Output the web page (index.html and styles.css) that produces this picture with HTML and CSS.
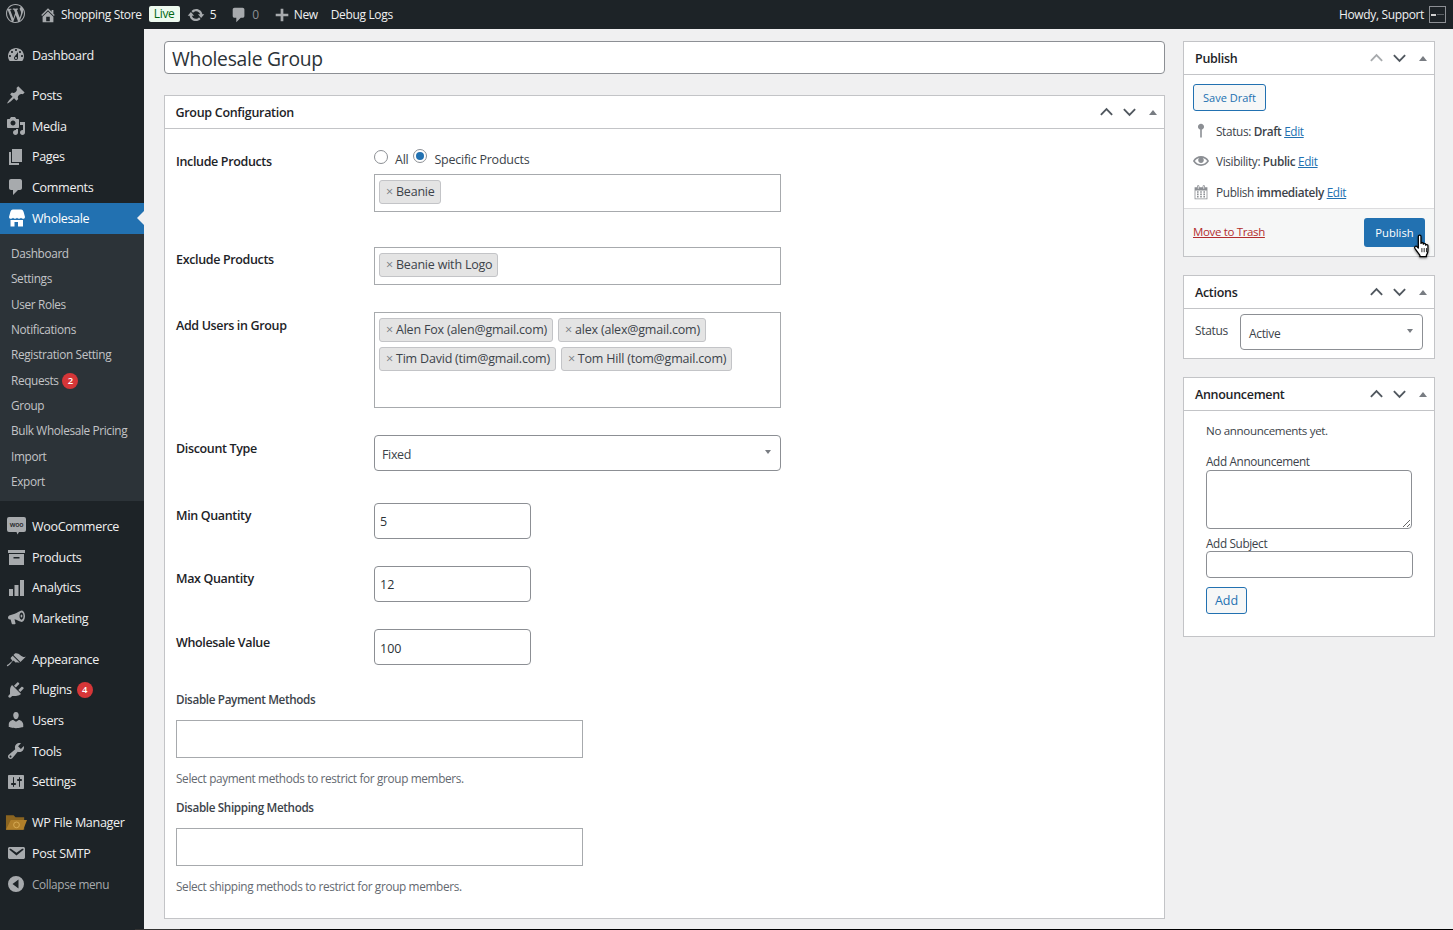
FILE: index.html
```html
<!DOCTYPE html>
<html lang="en">
<head>
<meta charset="utf-8">
<title>Wholesale Group</title>
<link rel="stylesheet" href="styles.css">
</head>
<body>
<svg class="defs" width="0" height="0" aria-hidden="true">
  <defs>
    <symbol id="i-wp" viewBox="0 0 20 20"><path d="M20 10c0-5.51-4.49-10-10-10C4.48 0 0 4.49 0 10c0 5.52 4.48 10 10 10 5.51 0 10-4.48 10-10zM7.78 15.37L4.37 6.22c.55-.02 1.17-.08 1.17-.08.5-.06.44-1.13-.06-1.11 0 0-1.45.11-2.37.11-.18 0-.37 0-.58-.01C4.12 2.69 6.87 1.11 10 1.11c2.33 0 4.45.87 6.05 2.34-.68-.11-1.65.39-1.65 1.58 0 .74.45 1.36.9 2.1.35.61.55 1.36.55 2.46 0 1.49-1.4 5-1.4 5l-3.03-8.37c.54-.02.82-.17.82-.17.5-.05.44-1.25-.06-1.22 0 0-1.44.12-2.38.12-.87 0-2.33-.12-2.33-.12-.5-.03-.56 1.2-.06 1.22l.92.08 1.26 3.41zM17.41 10c.24-.64.74-1.87.43-4.25.7 1.29 1.05 2.71 1.05 4.25 0 3.29-1.73 6.24-4.4 7.78.97-2.59 1.94-5.2 2.92-7.78zM6.1 18.09C3.12 16.65 1.11 13.53 1.11 10c0-1.3.23-2.48.72-3.59C3.25 10.3 4.67 14.2 6.1 18.09zm4.03-6.63l2.58 6.98c-.86.29-1.76.45-2.71.45-.79 0-1.57-.11-2.29-.33.81-2.38 1.62-4.74 2.42-7.1z"/></symbol>
    <symbol id="i-home" viewBox="0 0 20 20"><path d="M16 8.5l1.53 1.53-1.06 1.06L10 4.62l-6.47 6.47-1.06-1.06L10 2.5l4 4v-2h2v4zm-6-2.46l6 5.99V18H4v-5.97zM12 17v-5H8v5h4z"/></symbol>
    <symbol id="i-update" viewBox="0 0 20 20"><path d="M10.2 3.28c3.53 0 6.43 2.61 6.92 6h2.08l-3.5 4-3.5-4h2.32c-.45-1.97-2.21-3.45-4.32-3.45-1.45 0-2.73.71-3.54 1.78L4.95 5.66C6.23 4.2 8.11 3.28 10.2 3.28zm-.4 13.44c-3.52 0-6.43-2.61-6.92-6H.8l3.5-4c1.17 1.33 2.33 2.67 3.5 4H5.48c.45 1.97 2.21 3.45 4.32 3.45 1.45 0 2.73-.71 3.54-1.78l1.71 1.95c-1.28 1.46-3.15 2.38-5.25 2.38z"/></symbol>
    <symbol id="i-comment" viewBox="0 0 20 20"><path d="M5 2h9c1.1 0 2 .9 2 2v7c0 1.1-.9 2-2 2h-2l-5 5v-5H5c-1.1 0-2-.9-2-2V4c0-1.1.9-2 2-2z"/></symbol>
    <symbol id="i-plus" viewBox="0 0 20 20"><path d="M17 8.5v3h-5.500V17h-3v-5.500H3v-3h5.500V3h3v5.500H17z"/></symbol>
    <symbol id="i-dash" viewBox="0 0 20 20"><path d="M3.76 16h12.48c1.1-1.37 1.76-3.11 1.76-5 0-4.42-3.58-8-8-8s-8 3.58-8 8c0 1.89.66 3.63 1.76 5zM10 4c.55 0 1 .45 1 1s-.45 1-1 1-1-.45-1-1 .45-1 1-1zM6 6c.55 0 1 .45 1 1s-.45 1-1 1-1-.45-1-1 .45-1 1-1zm8 0c.55 0 1 .45 1 1s-.45 1-1 1-1-.45-1-1 .45-1 1-1zm-5.37 5.55L12 7v6c0 1.1-.9 2-2 2s-2-.9-2-2c0-.57.24-1.08.63-1.45zM4 10c.55 0 1 .45 1 1s-.45 1-1 1-1-.45-1-1 .45-1 1-1zm12 0c.55 0 1 .45 1 1s-.45 1-1 1-1-.45-1-1 .45-1 1-1zm-5 3c0-.55-.45-1-1-1s-1 .45-1 1 .45 1 1 1 1-.45 1-1z"/></symbol>
    <symbol id="i-pin" viewBox="0 0 20 20"><path d="M10.44 3.02l1.82-1.82 6.36 6.35-1.83 1.82c-1.05-.68-2.48-.57-3.41.36l-.75.75c-.92.93-1.04 2.35-.35 3.41l-1.83 1.82-2.41-2.41-2.8 2.79c-.42.42-3.38 2.71-3.8 2.29s1.86-3.39 2.28-3.81l2.79-2.79L4.1 9.36l1.83-1.82c1.05.69 2.48.57 3.4-.36l.75-.75c.93-.92 1.05-2.35.36-3.41z"/></symbol>
    <symbol id="i-media" viewBox="0 0 20 20"><path d="M13 11V4c0-.55-.45-1-1-1h-1.67L9 1H5L3.67 3H2c-.55 0-1 .45-1 1v7c0 .55.45 1 1 1h10c.55 0 1-.45 1-1zM7 4.5c1.38 0 2.5 1.12 2.5 2.5S8.38 9.5 7 9.5 4.5 8.38 4.5 7 5.62 4.5 7 4.5zM14 6h5v10.5c0 1.38-1.12 2.5-2.5 2.5S14 17.88 14 16.5s1.12-2.5 2.5-2.5c.17 0 .34.02.5.05V9h-3V6zm-4 8.05V13h2v3.5c0 1.38-1.12 2.5-2.5 2.5S7 17.88 7 16.5 8.12 14 9.5 14c.17 0 .34.02.5.05z"/></symbol>
    <symbol id="i-pages" viewBox="0 0 20 20"><path d="M6 15V2h10v13H6zm-1 1h8v2H3V5h2v11z"/></symbol>
    <symbol id="i-store" viewBox="0 0 20 20"><path d="M5 1.500h10c1.500 0 2.300 1 2.800 3l1.200 4.500c0 1.300-1.100 1.800-2 1.800-.9 0-1.500-.4-2-1-.5.6-1.200 1-2 1s-1.500-.4-2-1c-.5.6-1.200 1-2 1s-1.500-.4-2-1c-.5.6-1.100 1-2 1-.9 0-2-.5-2-1.800l1.200-4.500c.5-2 1.300-3 2.800-3z"/><path fill-rule="evenodd" d="M4.500 12h12.500v6.500H4.500zM8.500 14v4.500h3.500V14z"/></symbol>
    <symbol id="i-woo" viewBox="0 0 20 20"><path d="M3 1h15a2 2 0 0 1 2 2v11a2 2 0 0 1-2 2h-5l-1.500 2.500-1-2.500H3a2 2 0 0 1-2-2V3a2 2 0 0 1 2-2z"/></symbol>
    <symbol id="i-box" viewBox="0 0 20 20"><path fill-rule="evenodd" d="M2 3h17v3H2zM3 7h15v11H3zM7.500 10v1.500h6V10z"/></symbol>
    <symbol id="i-bars" viewBox="0 0 20 20"><path d="M3 11h4v7H3zM8.500 7h4v11h-4zM14 2h4v16h-4z"/></symbol>
    <symbol id="i-mega" viewBox="0 0 20 20"><path fill-rule="evenodd" d="M19 8c0 3-1.500 6-3.500 6-1 0-5-2.300-7-2.700l1 4c.1.500-.2.900-.7.900H6.500c-.4 0-.7-.2-.8-.6L4.600 11.500H4C2.800 11.500 2 10.500 2 9.500S2.800 7.700 4 7.300L8 6c2-.6 6.500-3.500 7.500-3.500C17.500 2.500 19 5 19 8zM15.500 4.500c-1.100 0-2 1.600-2 3.600s.9 3.600 2 3.600 2-1.600 2-3.600-.9-3.600-2-3.600z"/><ellipse cx="15.500" cy="8" rx=".9" ry="1.600"/></symbol>
    <symbol id="i-brush" viewBox="0 0 20 20"><path d="M14.480 11.060L7.410 3.990l1.500-1.500c.5-.56 2.300-.47 3.510.32 1.210.8 1.430 1.280 2.910 2.100 1.180.64 2.450 1.260 4.450.85zm-.71.71L6.700 4.700 4.930 6.470c-.39.39-.39 1.020 0 1.410l1.060 1.060c.39.39.39 1.030 0 1.420-.6.6-1.430 1.150-2.210 1.730-.35.260-.7.530-1.010.84C1.430 13.280.4 14.400 1.050 15.050s1.770-.38 3.120-1.720c.31-.31.580-.66.840-1.010.58-.78 1.130-1.610 1.730-2.210.39-.39 1.030-.39 1.420 0l1.060 1.060c.39.39 1.020.39 1.410 0z" transform="translate(0 2)"/></symbol>
    <symbol id="i-plug" viewBox="0 0 20 20"><path d="M13.110 4.360L9.870 7.600 8 5.730l3.240-3.240c.35-.34 1.050-.2 1.560.32.52.51.66 1.210.31 1.55zm-8 1.770l.91-1.120 9.010 9.010-1.190.84c-.71.71-2.630 1.160-3.820 1.160H6.140L4.900 17.260c-.59.59-1.540.59-2.120 0-.59-.58-.59-1.530 0-2.120l1.240-1.240v-3.880c0-1.130.4-3.190 1.090-3.890zm7.260 3.970l3.240-3.240c.34-.35 1.040-.21 1.550.31.52.51.66 1.210.31 1.550l-3.240 3.250z"/></symbol>
    <symbol id="i-user" viewBox="0 0 20 20"><path d="M10 9.250c-2.270 0-2.730-3.440-2.730-3.440C7 4.020 7.820 2 9.970 2c2.160 0 2.980 2.020 2.710 3.810 0 0-.41 3.440-2.680 3.440zm0 2.570L12.720 10c2.390 0 4.520 2.330 4.520 4.530v2.490s-3.650 1.130-7.240 1.130c-3.650 0-7.240-1.130-7.240-1.130v-2.490c0-2.250 1.940-4.480 4.470-4.480z"/></symbol>
    <symbol id="i-tool" viewBox="0 0 20 20"><path d="M16.680 9.770c-1.340 1.340-3.3 1.67-4.95.99l-5.41 6.52c-.99.99-2.59.99-3.58 0s-.99-2.59 0-3.57l6.52-5.42c-.68-1.65-.35-3.61.99-4.95 1.28-1.28 3.12-1.62 4.72-1.06l-2.89 2.89 2.82 2.82 2.86-2.87c.53 1.58.18 3.39-1.08 4.65zM3.81 16.21c.4.39 1.04.39 1.43 0 .4-.4.4-1.04 0-1.43-.39-.4-1.03-.4-1.43 0-.39.39-.39 1.03 0 1.43z"/></symbol>
    <symbol id="i-set" viewBox="0 0 20 20"><path d="M18 16V4c0-.55-.45-1-1-1H3c-.55 0-1 .45-1 1v12c0 .55.45 1 1 1h14c.55 0 1-.45 1-1zM8 11h1c.55 0 1 .45 1 1s-.45 1-1 1H8v1.500c0 .28-.22.5-.5.5s-.5-.22-.5-.5V13H6c-.55 0-1-.45-1-1s.45-1 1-1h1V5.500c0-.28.22-.5.5-.5s.5.22.5.5V11zm5-2h-1c-.55 0-1-.45-1-1s.45-1 1-1h1V5.500c0-.28.22-.5.5-.5s.5.22.5.5V7h1c.55 0 1 .45 1 1s-.45 1-1 1h-1v5.500c0 .28-.22.5-.5.5s-.5-.22-.5-.5V9z"/></symbol>
    <symbol id="i-mail" viewBox="0 0 20 20"><path d="M3.870 4h13.250C18.370 4 19 4.590 19 5.790v8.420c0 1.190-.63 1.790-1.880 1.790H3.870c-1.250 0-1.880-.6-1.880-1.790V5.790c0-1.200.63-1.790 1.880-1.790zm6.620 8.600l6.740-5.530c.24-.2.430-.66.130-1.070-.29-.41-.82-.42-1.170-.17l-5.700 3.860L4.800 5.830c-.35-.25-.88-.24-1.170.17-.3.41-.11.870.13 1.070z"/></symbol>
    <symbol id="i-collapse" viewBox="0 0 20 20"><path fill-rule="evenodd" d="M10 2a8 8 0 1 1 0 16 8 8 0 0 1 0-16zM12.500 5.500L6.500 10l6 4.500z"/></symbol>
    <symbol id="i-eye" viewBox="0 0 20 20"><path d="M19.700 9.400C17.700 6 14 3.900 10 3.900S2.300 6 .3 9.400L0 10l.3.6c2 3.400 5.700 5.500 9.700 5.500s7.700-2.100 9.700-5.500l.3-.6-.3-.6zM10 14.100c-3.100 0-6-1.600-7.700-4.100C3.600 8 5.700 6.600 8 6.100c-.9.6-1.500 1.700-1.500 2.900 0 1.900 1.600 3.500 3.500 3.500s3.500-1.600 3.500-3.500c0-1.200-.6-2.300-1.500-2.900 2.300.5 4.400 1.900 5.700 3.900-1.700 2.500-4.600 4.100-7.700 4.100z"/></symbol>
    <symbol id="i-spin" viewBox="0 0 20 20"><path d="M10 1.500c-2.100 0-3.800 1.700-3.800 3.800 0 1.700 1.200 3.200 2.800 3.600V18l1 1.500 1-1.500V8.900c1.600-.4 2.800-1.900 2.800-3.600 0-2.100-1.700-3.800-3.800-3.800z"/></symbol>
    <symbol id="i-cal" viewBox="0 0 20 20"><path d="M15 4h3v15H2V4h3V3c0-.41.15-.76.44-1.060.29-.29.65-.44 1.060-.44s.77.15 1.060.44c.29.3.44.65.44 1.060v1h4V3c0-.41.15-.76.44-1.060.29-.29.65-.44 1.060-.44s.77.15 1.060.44c.29.3.44.65.44 1.060v1zM6 3v2.500c0 .14.05.26.15.36.09.09.21.14.35.14s.26-.05.35-.14c.1-.1.15-.22.15-.36V3c0-.14-.05-.26-.15-.35-.09-.1-.21-.15-.35-.15s-.26.05-.35.15c-.1.09-.15.21-.15.35zm7 0v2.500c0 .14.05.26.14.36.1.09.22.14.36.14s.26-.05.36-.14c.09-.1.14-.22.14-.36V3c0-.14-.05-.26-.14-.35-.1-.1-.22-.15-.36-.15s-.26.05-.36.15c-.09.09-.14.21-.14.35zm4 15V8H3v10h14zM7 9v2H5V9h2zm2 0h2v2H9V9zm4 2V9h2v2h-2zm-6 1v2H5v-2h2zm2 0h2v2H9v-2zm4 2v-2h2v2h-2zm-6 1v2H5v-2h2zm4 2H9v-2h2v2zm4 0h-2v-2h2v2z"/></symbol>
    <symbol id="i-up" viewBox="0 0 16 10"><path d="M2 8l6-6 6 6" fill="none" stroke="currentColor" stroke-width="2"/></symbol>
    <symbol id="i-down" viewBox="0 0 16 10"><path d="M2 2l6 6 6-6" fill="none" stroke="currentColor" stroke-width="2"/></symbol>
  </defs>
</svg>

<header class="adminbar">
  <div class="ab-group">
    <svg class="ab-wp"><use href="#i-wp"/></svg>
    <svg class="ab-home"><use href="#i-home"/></svg>
    <span class="ab-text">Shopping Store</span>
    <span class="live">Live</span>
    <svg class="ab-update"><use href="#i-update"/></svg>
    <span class="ab-text">5</span>
    <svg class="ab-comment"><use href="#i-comment"/></svg>
    <span class="ab-text ab-dim">0</span>
    <svg class="ab-plus"><use href="#i-plus"/></svg>
    <span class="ab-text">New</span>
    <span class="ab-text ab-debug">Debug Logs</span>
  </div>
  <div class="ab-group">
    <span class="ab-text">Howdy, Support</span>
    <span class="avatar"><span class="avatar-mark"></span><span class="avatar-rest"></span></span>
  </div>
</header>

<div class="layout">
  <nav class="sidebar">
    <ul class="menu">
      <li class="item"><svg class="mi"><use href="#i-dash"/></svg>Dashboard</li>
      <li class="item sep sep-first"><svg class="mi"><use href="#i-pin"/></svg>Posts</li>
      <li class="item"><svg class="mi"><use href="#i-media"/></svg>Media</li>
      <li class="item"><svg class="mi"><use href="#i-pages"/></svg>Pages</li>
      <li class="item"><svg class="mi"><use href="#i-comment"/></svg>Comments</li>
      <li class="item current"><svg class="mi"><use href="#i-store"/></svg>Wholesale</li>
      <li class="submenu">
        <ul>
          <li>Dashboard</li>
          <li>Settings</li>
          <li>User Roles</li>
          <li>Notifications</li>
          <li>Registration Setting</li>
          <li>Requests <span class="count">2</span></li>
          <li>Group</li>
          <li>Bulk Wholesale Pricing</li>
          <li>Import</li>
          <li>Export</li>
        </ul>
      </li>
      <li class="item sep"><svg class="mi"><use href="#i-woo"/><text class="woo-text" x="10.500" y="11">woo</text></svg>WooCommerce</li>
      <li class="item"><svg class="mi"><use href="#i-box"/></svg>Products</li>
      <li class="item"><svg class="mi"><use href="#i-bars"/></svg>Analytics</li>
      <li class="item"><svg class="mi"><use href="#i-mega"/></svg>Marketing</li>
      <li class="item sep"><svg class="mi"><use href="#i-brush"/></svg>Appearance</li>
      <li class="item"><svg class="mi"><use href="#i-plug"/></svg>Plugins <span class="count">4</span></li>
      <li class="item"><svg class="mi"><use href="#i-user"/></svg>Users</li>
      <li class="item"><svg class="mi"><use href="#i-tool"/></svg>Tools</li>
      <li class="item"><svg class="mi"><use href="#i-set"/></svg>Settings</li>
      <li class="item sep"><svg class="mi mi-folder" viewBox="0 0 24 20"><path fill="#8a6420" d="M1 3h8l2 2h9v13H1z"/><path fill="#b07f2a" d="M6 8h17l-4 10H1z"/><circle cx="12" cy="13" r="3" fill="none" stroke="#d7ab55" stroke-width="1"/></svg>WP File Manager</li>
      <li class="item"><svg class="mi"><use href="#i-mail"/></svg>Post SMTP</li>
      <li class="item collapse"><svg class="mi"><use href="#i-collapse"/></svg>Collapse menu</li>
    </ul>
  </nav>

  <main class="content">
    <div class="main-col">
      <input class="title" type="text" value="Wholesale Group" aria-label="Title">
      <section class="box group-box">
        <div class="box-head">
          <h2>Group Configuration</h2>
          <div class="box-ctrls">
            <svg class="chev"><use href="#i-up"/></svg>
            <svg class="chev"><use href="#i-down"/></svg>
            <span class="tri"></span>
          </div>
        </div>
        <div class="form">
          <div class="row row-include">
            <label class="lbl">Include Products</label>
            <div class="field">
              <div class="radios">
                <input class="radio" type="radio" name="scope" aria-label="All"><span class="radio-l">All</span>
                <input class="radio" type="radio" name="scope" checked aria-label="Specific Products"><span class="radio-l">Specific Products</span>
              </div>
              <div class="tags tags-one"><span class="tag"><i>×</i>Beanie</span></div>
            </div>
          </div>
          <div class="row row-exclude">
            <label class="lbl">Exclude Products</label>
            <div class="field">
              <div class="tags tags-one"><span class="tag"><i>×</i>Beanie with Logo</span></div>
            </div>
          </div>
          <div class="row row-users">
            <label class="lbl lbl-low">Add Users in Group</label>
            <div class="field">
              <div class="tags tags-users">
                <span class="tag"><i>×</i>Alen Fox (alen@gmail.com)</span>
                <span class="tag"><i>×</i>alex (alex@gmail.com)</span>
                <span class="tag"><i>×</i>Tim David (tim@gmail.com)</span>
                <span class="tag"><i>×</i>Tom Hill (tom@gmail.com)</span>
              </div>
            </div>
          </div>
          <div class="row row-discount">
            <label class="lbl lbl-low">Discount Type</label>
            <div class="field">
              <div class="select select-wide"><span>Fixed</span></div>
            </div>
          </div>
          <div class="row row-num">
            <label class="lbl">Min Quantity</label>
            <input class="num" type="text" value="5" aria-label="Min Quantity">
          </div>
          <div class="row row-num">
            <label class="lbl">Max Quantity</label>
            <input class="num" type="text" value="12" aria-label="Max Quantity">
          </div>
          <div class="row row-num row-val">
            <label class="lbl lbl-low">Wholesale Value</label>
            <input class="num" type="text" value="100" aria-label="Wholesale Value">
          </div>
          <div class="block block-pay">
            <label class="lbl-b">Disable Payment Methods</label>
            <div class="multi"></div>
            <p class="help">Select payment methods to restrict for group members.</p>
          </div>
          <div class="block">
            <label class="lbl-b">Disable Shipping Methods</label>
            <div class="multi"></div>
            <p class="help">Select shipping methods to restrict for group members.</p>
          </div>
        </div>
      </section>
    </div>

    <aside class="side-col">
      <section class="box publish">
        <div class="box-head side-head">
          <h2>Publish</h2>
          <div class="box-ctrls side-ctrls">
            <svg class="chev chev-dim"><use href="#i-up"/></svg>
            <svg class="chev"><use href="#i-down"/></svg>
            <span class="tri"></span>
          </div>
        </div>
        <div class="pub-body">
          <button class="btn-sec btn-draft" type="button">Save Draft</button>
          <div class="pub-row pub-status"><svg class="pi pi-pin"><use href="#i-spin"/></svg><span>Status: <b>Draft</b> <a href="#">Edit</a></span></div>
          <div class="pub-row pub-vis"><svg class="pi"><use href="#i-eye"/></svg><span>Visibility: <b>Public</b> <a href="#">Edit</a></span></div>
          <div class="pub-row pub-date"><svg class="pi"><use href="#i-cal"/></svg><span>Publish <b>immediately</b> <a href="#">Edit</a></span></div>
        </div>
        <div class="pub-foot">
          <a class="trash" href="#">Move to Trash</a>
          <button class="btn-pri" type="button">Publish</button>
          <svg class="cursor" viewBox="0 0 17 24"><path fill="#fff" stroke="#000" stroke-width="1.200" stroke-linejoin="round" d="M5 2.200c0-1.600 2.500-1.600 2.500 0V9c0-.9 2.300-.9 2.300 0v.8c0-.9 2.200-.9 2.200 0v.9c0-.9 2.200-.7 2.200.4V16c0 2-1 3.500-1.500 4.500v1.300H6.500v-1.300L1.800 14c-1.200-1.800.8-3.200 2-1.800L5 13.500z"/><path stroke="#000" stroke-width=".8" d="M8.400 13.500v4M10.600 13.500v4M12.800 13.500v4"/></svg>
        </div>
      </section>

      <section class="box actions">
        <div class="box-head side-head">
          <h2>Actions</h2>
          <div class="box-ctrls side-ctrls">
            <svg class="chev"><use href="#i-up"/></svg>
            <svg class="chev"><use href="#i-down"/></svg>
            <span class="tri"></span>
          </div>
        </div>
        <div class="act-body">
          <span class="act-l">Status</span>
          <div class="select select-act"><span>Active</span></div>
        </div>
      </section>

      <section class="box announce">
        <div class="box-head side-head">
          <h2>Announcement</h2>
          <div class="box-ctrls side-ctrls">
            <svg class="chev"><use href="#i-up"/></svg>
            <svg class="chev"><use href="#i-down"/></svg>
            <span class="tri"></span>
          </div>
        </div>
        <div class="ann-body">
          <p class="ann-empty">No announcements yet.</p>
          <label class="ann-l ann-l1">Add Announcement</label>
          <textarea class="ann-area" aria-label="Add Announcement"></textarea>
          <label class="ann-l ann-l2">Add Subject</label>
          <input class="ann-input" type="text" aria-label="Add Subject">
          <button class="btn-sec btn-add" type="button">Add</button>
        </div>
      </section>
    </aside>
  </main>
</div>
<div class="edge"><span class="edge-gap"></span><span class="edge-grey"></span></div>
</body>
</html>
```
FILE: styles.css
```css
* { box-sizing: border-box; }
html, body { margin: 0; padding: 0; height: 930px; overflow: hidden; }
body {
  background: #f0f0f1;
  color: #3c434a;
  font-family: "Open Sans", "Noto Sans", sans-serif;
  font-size: 12.500px;
  letter-spacing: -0.35px;
}
ul { list-style: none; margin: 0; padding: 0; }
p, h2 { margin: 0; }
a { color: #2271b1; }
.defs { position: absolute; }

/* admin bar */
.adminbar {
  height: 29px;
  background: #1d2327;
  display: flex;
  justify-content: space-between;
  align-items: center;
  padding: 0 7px 0 6px;
  font-size: 12px;
}
.ab-group { display: flex; align-items: center; }
.ab-text { color: #f0f0f1; line-height: 29px; }
.ab-dim { color: #8c8f94; }
.adminbar svg { fill: #a7aaad; }
.ab-wp { width: 19px; height: 19px; margin-right: 14px; margin-bottom: 2px; }
.ab-home { width: 18px; height: 18px; margin-right: 4px; }
.live {
  background: #edfaef;
  color: #00660f;
  line-height: 16px;
  height: 16px;
  width: 31px;
  text-align: center;
  border-radius: 2px;
  margin: 0 7px 2px 7px;
}
.ab-update { width: 18px; height: 18px; margin-right: 5px; }
.ab-comment { width: 18px; height: 18px; margin: 1px 4px 0 14px; }
.ab-plus { width: 18px; height: 18px; margin: 0 3px 0 14px; }
.ab-debug { margin-left: 13px; }
.avatar {
  width: 17px; height: 17px;
  border: 1px solid #8c8f94;
  margin-left: 5px;
  background: #1d2327;
  display: flex;
  align-items: center;
  gap: 1px;
  padding-left: 1px;
}
.avatar-mark { width: 5px; height: 2px; background: #d0d0d0; }
.avatar-rest { width: 7px; height: 1px; background: #5a5f63; }

/* layout */
.layout { display: flex; height: 900px; }
.sidebar { width: 144px; flex: none; background: #1d2327; padding-top: 11px; }

.item {
  height: 30.700px;
  display: flex;
  align-items: center;
  color: #f0f0f1;
  font-size: 12.600px;
  padding-left: 32px;
  position: relative;
  white-space: pre;
}
.item.sep { margin-top: 10px; }
.item.sep-first { margin-top: 9.200px; height: 31px; }
.item .count { margin-left: 2px; }
.mi {
  position: absolute;
  left: 6px;
  top: 5px;
  width: 20px;
  height: 20px;
  fill: #a7aaad;
}
.mi-folder { left: 5px; width: 23px; }
.woo-text { fill: #1d2327; font-size: 7px; font-weight: 600; text-anchor: middle; letter-spacing: -0.3px; }
.current { background: #2271b1; color: #fff; }
.current .mi { fill: #fff; }
.current::after {
  content: "";
  position: absolute;
  right: 0;
  top: 8px;
  border: 7px solid transparent;
  border-left: 0;
  border-right: 7px solid #f0f0f1;
}
.submenu { background: #2c3338; padding: 7.400px 0 0; height: 267.500px; }
.submenu li {
  height: 25.350px;
  line-height: 25.350px;
  padding-left: 11px;
  color: #c3c4c7;
  font-size: 11.800px;
  white-space: pre;
}
.count {
  display: inline-block;
  min-width: 16px;
  height: 16px;
  line-height: 16px;
  border-radius: 8px;
  background: #d63638;
  color: #fff;
  font-size: 9.500px;
  font-weight: 600;
  text-align: center;
  letter-spacing: 0;
  vertical-align: 1px;
  margin-left: 1px;
}
.collapse { color: #a7aaad; font-size: 11.800px; }
.collapse .mi { left: 6px; }

/* content */
.content { flex: 1; display: flex; padding: 12px 18px 0 20px; gap: 18px; align-items: flex-start; }
.main-col { width: 1001px; flex: none; }
.side-col { width: 252px; flex: none; }

.title {
  display: block;
  width: 100%;
  height: 33px;
  border: 1px solid #8c8f94;
  border-radius: 4px;
  background: #fff;
  color: #2c3338;
  font: inherit;
  font-size: 19.300px;
  letter-spacing: -0.25px;
  padding: 2px 7px 0;
  margin-bottom: 21px;
  outline: none;
}

.box { background: #fff; border: 1px solid #c3c4c7; }
.box-head {
  height: 33px;
  display: flex;
  align-items: center;
  justify-content: space-between;
  border-bottom: 1px solid #c3c4c7;
  padding-left: 10.500px;
}
.box-head h2 { font-size: 12.500px; font-weight: 600; color: #1d2327; letter-spacing: -0.3px; }
.box-ctrls { display: flex; align-items: center; gap: 8px; padding-right: 7px; }
.chev { width: 15px; height: 10px; color: #50575e; }
.chev-dim { color: #a7aaad; }
.tri {
  width: 0; height: 0;
  border: 4px solid transparent;
  border-top: 0;
  border-bottom: 5px solid #787c82;
  margin-left: 4px;
}
.side-ctrls .tri { margin-left: 4.500px; }

.group-box { height: 824px; }
.form { padding: 21px 11px 0 11px; }
.row { display: flex; }
.lbl {
  width: 198px;
  flex: none;
  font-weight: 600;
  color: #1d2327;
  padding-top: 3px;
  line-height: 20px;
}
.lbl-low { padding-top: 4px; }
.row-include .lbl { padding-top: 2px; }
.row-include { margin-bottom: 35px; }
.row-exclude { margin-bottom: 27px; }
.row-users { margin-bottom: 27px; }
.row-discount { margin-bottom: 32px; }
.row-num { margin-bottom: 27px; }
.row-val { margin-bottom: 24px; }
.field { width: 407px; }

.radios { height: 24px; display: flex; align-items: flex-start; }
.radio {
  appearance: none;
  width: 14px; height: 14px;
  margin: 0 7px 0 0;
  border: 1px solid #8c8f94;
  border-radius: 50%;
  background: #fff;
  position: relative;
  flex: none;
}
.radio:checked { margin: -1px 7px 0 1px; }
.radio:checked::before {
  content: "";
  position: absolute;
  left: 2px; top: 2px;
  width: 8px; height: 8px;
  border-radius: 50%;
  background: #2271b1;
}
.radio-l { line-height: 18px; margin-top: 1px; margin-right: 4px; letter-spacing: -0.25px; }

.tags {
  border: 1px solid #a7aaad;
  background: #fff;
  display: flex;
  flex-wrap: wrap;
  align-content: flex-start;
  gap: 5px 5px;
  padding: 5px 4px;
}
.tags-one { height: 38px; }
.tags-users { height: 96px; }
.tag {
  height: 24px;
  line-height: 22px;
  border: 1px solid #c3c4c7;
  border-radius: 3px;
  background: #e4e4e4;
  color: #3c434a;
  padding: 0 5px;
  white-space: pre;
  letter-spacing: -0.2px;
}
.tag i { font-style: normal; color: #787c82; margin: 0 3px 0 1px; font-size: 12.500px; }

.select {
  border: 1px solid #8c8f94;
  border-radius: 4px;
  background: #fff;
  position: relative;
  display: flex;
  align-items: center;
  padding: 2px 7px 0;
}
.select::after {
  content: "";
  position: absolute;
  right: 9px;
  top: 50%;
  margin-top: -3px;
  border: 3px solid transparent;
  border-top: 4px solid #787c82;
  border-bottom: 0;
}
.select-wide { height: 36px; }

.num {
  width: 157px;
  height: 36px;
  border: 1px solid #8c8f94;
  border-radius: 4px;
  background: #fff;
  color: #2c3338;
  font: inherit;
  padding: 0 5px;
}
.row-val .num { padding-top: 2px; }

.block-pay { margin-bottom: 10px; }
.lbl-b { display: block; font-size: 11.700px; font-weight: 600; color: #3c434a; line-height: 20px; }
.multi { width: 407px; height: 38px; border: 1px solid #a7aaad; background: #fff; margin-top: 11px; }
.help { font-size: 11.800px; color: #646970; line-height: 18px; margin-top: 11px; }

/* side */
.side-head { padding-left: 11px; }
.side-ctrls { padding-right: 7px; }
.publish { height: 216px; display: flex; flex-direction: column; margin-bottom: 18px; }
.pub-body { padding: 9px 9px 0; flex: 1; }
.btn-sec {
  display: block;
  border: 1px solid #2271b1;
  border-radius: 3px;
  background: #f6f7f7;
  color: #2271b1;
  font: inherit;
  height: 27px;
  width: 73px;
  padding: 0;
}
.btn-draft { font-size: 11px; }
.pub-row { display: flex; align-items: center; height: 20px; font-size: 11.800px; }
.pub-row b { font-weight: 600; }
.pub-status { margin-top: 9.500px; }
.pub-vis { margin-top: 10px; }
.pub-date { margin-top: 11px; }
.pi { width: 16px; height: 16px; fill: #8c8f94; margin-right: 7px; flex: none; }
.pi-pin { height: 17px; }
.pub-foot {
  height: 48px;
  background: #f6f7f7;
  border-top: 1px solid #dcdcde;
  display: flex;
  align-items: center;
  justify-content: space-between;
  padding: 0 9px;
  position: relative;
  font-size: 11.500px;
}
.trash { color: #b32d2e; margin-bottom: 2px; }
.btn-pri {
  width: 61px;
  height: 29px;
  background: #2271b1;
  border: 0;
  border-radius: 3px;
  color: #fff;
  font: inherit;
  font-size: 11.200px;
  padding: 0;
}
.cursor {
  position: absolute;
  left: 229px;
  top: 25px;
  width: 18px;
  height: 25px;
  filter: drop-shadow(0 1px 1px rgba(0, 0, 0, .5));
}

.actions { height: 84px; margin-bottom: 18px; }
.act-body { display: flex; justify-content: space-between; padding: 5px 11px 0 11px; }
.act-l { line-height: 20px; color: #3c434a; font-size: 12px; padding-top: 7px; }
.select-act { width: 183px; height: 36px; padding-left: 8px; font-size: 12px; }

.announce { height: 260px; }
.ann-body { padding: 10px 22px 0; }
.ann-empty { line-height: 20px; font-size: 11.600px; }
.ann-l { display: block; line-height: 18px; font-size: 11.750px; }
.ann-l1 { margin-top: 11px; }
.ann-l2 { margin-top: 5px; }
.ann-area {
  display: block;
  width: 206px;
  height: 59px;
  border: 1px solid #8c8f94;
  border-radius: 4px;
  background: #fff;
  margin: 0;
}
.ann-input {
  display: block;
  width: 207px;
  height: 27px;
  border: 1px solid #8c8f94;
  border-radius: 4px;
  margin-top: -1px;
}
.btn-add { width: 41px; height: 27px; margin-top: 9px; }

.edge { height: 1px; background: #000; display: flex; }
.edge-gap { width: 135px; background: #1d2327; }
.edge-grey { width: 45px; background: #333; }
```
